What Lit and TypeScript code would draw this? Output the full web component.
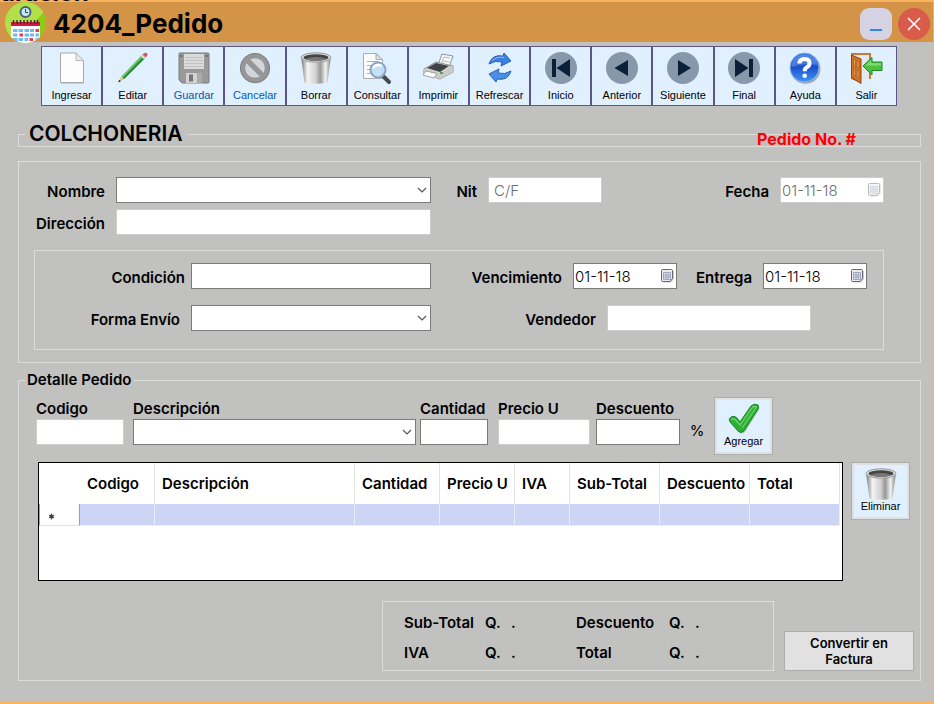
import { LitElement, html, css, svg, nothing, TemplateResult } from "lit";
import { customElement, property } from "lit/decorators.js";
import { classMap } from "lit/directives/class-map.js";

const ring = (shape: TemplateResult) => svg`
  <circle cx="16" cy="16" r="16" fill="#8798aa"/>${shape}`;

const ICONS: Record<string, TemplateResult> = {
  page: svg`
    <path d="M5 2H20L28 9V32H5Z" fill="#8c9097" opacity=".35"/>
    <path d="M4.500 1H20L27.500 8.500V30.500H4.500Z" fill="#fdfdfd" stroke="#a9abad"/>
    <path d="M20 1V8.500H27.500Z" fill="#e9ebed" stroke="#b4b6b8"/>`,
  pencil: svg`
    <path d="M2 29.500L4.500 24.500L25 3L28 6L7 27Z" fill="#3fa043"/>
    <path d="M4.500 24.500L25 3L26 4L5.500 25.500Z" fill="#7fd07c"/>
    <path d="M6.200 26.200L27.200 5.200L28 6L7 27Z" fill="#217a2c"/>
    <path d="M2 29.500L4.500 24.500L7 27Z" fill="#ecc98d"/>
    <path d="M1 30.500L2.400 27.800L3.900 29.200Z" fill="#222"/>
    <path d="M23.800 4.200L25.500 2.500L28.500 5.500L26.800 7.200Z" fill="#d9dadd"/>
    <path d="M25.500 2.500Q28 0 30 1.300Q31.500 3 28.500 5.500Z" fill="#d1545c"/>`,
  floppy: svg`
    <path d="M1 2Q1 1 2 1H30Q31 1 31 2V30Q31 31 30 31H4L1 28Z" fill="#9a9a9a" stroke="#7c7c7c"/>
    <rect x="6" y="2" width="20" height="15" fill="#dadada"/>
    <path d="M7 5.500H25M7 8.500H25M7 11.500H25M7 14.500H25" stroke="#c2c2c2"/>
    <rect x="2.500" y="3" width="2" height="2" fill="#666"/><rect x="27.500" y="3" width="2" height="2" fill="#666"/>
    <rect x="8" y="21" width="16" height="10" fill="#d2d2d2"/>
    <rect x="11" y="22.500" width="4" height="7" fill="#747474"/>
    <rect x="19" y="21" width="5" height="10" fill="#aaa"/>`,
  cancel: svg`
    <circle cx="16.500" cy="17" r="14.500" fill="#777" opacity=".3"/>
    <circle cx="16" cy="16" r="12.300" fill="#d0d6dc" stroke="#979797" stroke-width="5"/>
    <path d="M8 8L24 24" stroke="#979797" stroke-width="5.400"/>
    <circle cx="16" cy="16" r="14.600" fill="none" stroke="#808080"/>`,
  bin: svg`
    <defs><linearGradient id="metal">
      <stop offset="0" stop-color="#777"/><stop offset=".22" stop-color="#f4f4f4"/>
      <stop offset=".5" stop-color="#cfcfcf"/><stop offset=".64" stop-color="#979797"/>
      <stop offset=".82" stop-color="#f2f2f2"/><stop offset="1" stop-color="#808080"/>
    </linearGradient></defs>
    <path d="M1 5L4.500 30.500Q16 33 27.500 30.500L31 5Z" fill="url(#metal)"/>
    <ellipse cx="16" cy="5.500" rx="15" ry="4.700" fill="#dcdcdc" stroke="#9a9a9a"/>
    <ellipse cx="16" cy="5.500" rx="12.500" ry="3.300" fill="#454545"/>
    <path d="M5 7Q16 3 27 7Q22 9 16 9T5 7Z" fill="#777"/>`,
  search: svg`
    <path d="M2.500 1.500H15L21.500 7.500V26.500H2.500Z" fill="#fafbfc" stroke="#a8adb3"/>
    <path d="M15 1.500V7.500H21.500Z" fill="#dde1e5" stroke="#a8adb3"/>
    <path d="M6 9.500H18M6 13.500H12M6 17.500H10M6 21.500H12" stroke="#aab4c0"/>
    <path d="M22 24L28 30" stroke="#454b54" stroke-width="4" stroke-linecap="round"/>
    <circle cx="17" cy="18" r="7.500" fill="#b9dcf8" fill-opacity=".85" stroke="#8fa3bf" stroke-width="2"/>
    <path d="M12 16Q15 11 21 14" stroke="#fff" stroke-width="2" fill="none"/>`,
  printer: svg`
    <path d="M16 13L20 2L31 4L27 15Z" fill="#f5f7f8" stroke="#8e9499"/>
    <path d="M19.500 11L22 5L28 6M21 9L27 10" stroke="#b6bcc2" fill="none"/>
    <path d="M2 17L14 10L31 14V20L18 27L2 22Z" fill="#d2d4d2" stroke="#8c8f8e"/>
    <path d="M5 16L14 11L27 14L18 20Z" fill="#3f4346"/>
    <path d="M2 17L18 21L31 14V20L18 27L2 22Z" fill="#c9cbc9"/>
    <path d="M4 19L15 21.500L12 26L1 23Z" fill="#fff" stroke="#9da2a5"/>
    <rect x="18" y="20" width="3" height="2" fill="#55a345"/>`,
  refresh: svg`
    <path d="M5 12Q8 2 19 4L20 1L27 9L17 14L18 10Q11 8 5 12Z" fill="#3d7fdf" stroke="#2560b8"/>
    <path d="M27 19Q24 29 13 27L12 30L5 22L15 17L14 21Q21 23 27 19Z" fill="#4a8ee8" stroke="#2560b8"/>
    <path d="M8 9Q12 4 20 5.500" stroke="#8dbcf8" fill="none"/>`,
  first: ring(svg`<path d="M7 7H11V25H7ZM25 7V25L11.500 16Z" fill="#0a2038"/>`),
  prev: ring(svg`<path d="M22 8V24L8.500 16Z" fill="#0a2038"/>`),
  next: ring(svg`<path d="M11 8V24L24 16Z" fill="#0a2038"/>`),
  last: ring(svg`<path d="M7 7V25L20.500 16ZM21 7H25V25H21Z" fill="#0a2038"/>`),
  help: svg`
    <defs><linearGradient id="blue" x1="0" y1="0" x2="0" y2="1">
      <stop offset="0" stop-color="#2f6fe0"/><stop offset=".5" stop-color="#1c52cf"/><stop offset="1" stop-color="#3f95f5"/>
    </linearGradient></defs>
    <circle cx="16.500" cy="16.800" r="15" fill="#5b6470" opacity=".5"/>
    <circle cx="15.500" cy="15.500" r="14.500" fill="url(#blue)" stroke="#8eb2ea"/>
    <path d="M2.500 15Q3 3 15.500 2.500Q28 3 28.500 13Q15 10 2.500 15Z" fill="#7fa9ee" opacity=".45"/>
    <path d="M10.500 11.500Q10.500 7 15.500 7T20.500 11.300Q20.500 14 17.800 15.300Q15.700 16.300 15.700 19.300" stroke="#fff" stroke-width="4" fill="none"/>
    <circle cx="15.700" cy="23.700" r="2.300" fill="#fff"/>`,
  exit: svg`
    <path d="M1 1H21V27H11V31L1 27Z" fill="#c87a38"/>
    <path d="M3 3H19V27H11L3 5Z" fill="#e4e8ee"/>
    <path d="M1.500 3L11 7V31.500L1.500 25.500Z" fill="#cf7427" stroke="#8d4713"/>
    <path d="M3.500 7L5.500 8V14L3.500 13ZM7 8.500L9 9.500V16L7 15ZM3.500 16.500L5.500 17.500V24L3.500 23ZM7 18L9 19V26L7 25Z" fill="#e59a55" stroke="#a5591d" stroke-width=".6"/>
    <path d="M13 14L22 5.500V10H32V18.500H22V23Z" fill="#4cc13f" stroke="#1f8a22"/>
    <path d="M15.500 13.500L21.200 8V11.200H31V13.500Z" fill="#9be58c" opacity=".7"/>`,
  check: svg`
    <path d="M3 20Q1 17 4 15T9 16L12 20L24 3Q28 0 31 3Q32 5 31 7L17 29Q14 32 11 29Z" fill="#777" opacity=".35"/>
    <path d="M2 19Q0 16 3 14T9 15L12 19L23 3Q26 0 30 2Q31 4 30 6L16 28Q13 31 10 28Z" fill="#2fae35" stroke="#128a20"/>
    <path d="M3.500 17Q4 15 7 16.500L12 22L24.500 4.500Q26.500 2.500 28.500 4L14 25" fill="none" stroke="#6fd56c" stroke-width="1.200"/>`,
};

@customElement("tool-icon")
class ToolIcon extends LitElement {
  @property() name = "";
  static styles = css`
    :host { display: block; width: 32px; height: 32px; }
    .art { display: block; width: 100%; height: 100%; overflow: visible; }
  `;
  render() {
    return html`<svg class="art" viewBox="0 0 32 32" aria-hidden="true">${ICONS[this.name] ?? nothing}</svg>`;
  }
}

const TOOLS: [string, string, boolean?][] = [
  ["Ingresar", "page"], ["Editar", "pencil"], ["Guardar", "floppy", true], ["Cancelar", "cancel", true],
  ["Borrar", "bin"], ["Consultar", "search"], ["Imprimir", "printer"], ["Refrescar", "refresh"],
  ["Inicio", "first"], ["Anterior", "prev"], ["Siguiente", "next"], ["Final", "last"],
  ["Ayuda", "help"], ["Salir", "exit"],
];

const COLUMNS: [string, string][] = [
  ["Codigo", "c-code"], ["Descripción", "c-desc"], ["Cantidad", "c-qty"], ["Precio U", "c-price"],
  ["IVA", "c-iva"], ["Sub-Total", "c-sub"], ["Descuento", "c-disc"], ["Total", "c-total"],
];

@customElement("app-root")
class AppRoot extends LitElement {
  static styles = css`
    :host {
      display: block;
      font: 600 15px/20px Inter, "Open Sans", sans-serif;
      color: #000;
      --line: #dcdcda;
      --face: #c1c1bf;
      --amber: #f9b35f;
    }
    * { box-sizing: border-box; }
    button, input, select { font: inherit; color: inherit; margin: 0; }
    button { cursor: pointer; }
    fieldset { margin: 0; padding: 0; min-width: 0; border: 1px solid var(--line); }

    .window {
      min-height: 100vh; display: flex; flex-direction: column;
      background: var(--face);
      border-right: 1px solid var(--amber); border-bottom: 2px solid var(--amber);
    }
    .behind {
      height: 2px; overflow: hidden; background: var(--amber);
      display: flex; align-items: flex-end;
      font-size: 24px; line-height: 18px; font-weight: 700;
    }
    .titlebar {
      height: 40px; background: #d39447; padding: 0 3px 0 5px;
      display: flex; align-items: center; gap: 6px;
    }
    .logo { width: 41px; height: 41px; flex: none; }
    .title { flex: 1; margin: 0; padding: 3px 0 0 1px; font-size: 26px; line-height: 37px; font-weight: 700; }
    .win { width: 32px; height: 32px; padding: 0; border: 0; margin-top: 4px; }
    .min { background: #d5d3e3; border-radius: 9px; }
    .close { background: #d95b4a; border-radius: 50%; }
    .win svg { display: block; width: 32px; height: 32px; }

    .toolbar { display: grid; grid-template-columns: repeat(14, 1fr); margin: 4px 36px 0 41px; }
    .tool {
      height: 60px; padding: 5px 0 0; border: 1px solid #5b568a; background: #e0f0ff;
      display: flex; flex-direction: column; align-items: center; gap: 4px;
    }
    .tool, .action { font: 11px/14px "Liberation Sans", Arial, sans-serif; color: #000; }
    .tool.blue { color: #0a57b0; }

    .body { padding: 16px 12px 21px 18px; }
    .store-box { position: relative; }
    .store { font-size: 21px; line-height: 24px; margin-left: 6px; padding: 0 4px; background: var(--face); font-weight: 600; }
    .order { position: absolute; right: 64px; top: -6px; color: #f00; font-size: 16px; font-weight: 700; transform: none; margin-top: -11px; }
    .legend { margin-left: 6px; padding: 0 3px 0 2px; }

    .client { margin-top: 14px; padding: 15px 0 12px; }
    .row { display: grid; align-items: center; }
    .client-row { grid-template-columns: 97px 315fr 57px 114fr 178px 104px; padding-right: 36px; }
    .client-row + .client-row { margin-top: 6px; }
    .terms { margin: 15px 36px 0 15px; padding: 12px 16px 18px 0; }
    .terms-row { grid-template-columns: 156px 240fr 142px 104px 86px 104px; }
    .ship-row { grid-template-columns: 156px 240fr 176px 204px 56px; margin-top: 16px; }
    .lab { text-align: right; padding: 3px 11px 0 0; white-space: nowrap; }
    .lab.tight { padding-right: 6px; }

    .box {
      display: block; width: 100%; height: 26px; padding: 0 4px; border: 1px solid #7a7a7a;
      border-radius: 0; background: #fff; outline: 0; font-weight: 300; appearance: none; opacity: 1;
    }
    .box:disabled { border-color: #ccc; color: #6d6d6d; }
    .pick { position: relative; }
    .glyph { position: absolute; right: 4px; top: 8px; width: 10px; height: 10px; pointer-events: none; }
    .date .box { padding-left: 1px; }
    .date .glyph { right: 3px; top: 6px; width: 13px; height: 14px; }
    .faded { opacity: .45; }
    .nit { padding-left: 5px; }

    .detail { margin-top: 7px; padding-bottom: 9px; }
    .entry { padding: 7px 147px 0 17px; grid-template-columns: 97px 287fr 78px 98px 84px 34px 59px; align-items: start; }
    .field { padding-top: 2px; white-space: nowrap; }
    .field label { display: block; }
    .field.code { padding-right: 9px; }
    .field.desc { padding-right: 4px; }
    .field.qty { padding-right: 10px; }
    .field.price { padding-right: 6px; }
    .percent { align-self: center; text-align: center; font-weight: 400; padding-top: 10px; }
    .action {
      width: 59px; height: 58px; padding: 5px 0 0; border: 1px solid #adadad; background: #e0f0ff;
      box-shadow: inset 0 0 0 2px #e1e1e1; line-height: 12px;
      display: flex; flex-direction: column; align-items: center;
    }

    .list { display: grid; grid-template-columns: 1fr 59px; gap: 8px; margin: 7px 10px 0 19px; align-items: start; }
    .sheet { min-height: 119px; background: #fff; border: 1px solid #000; padding-right: 2px; }
    table { width: 100%; table-layout: fixed; border-collapse: separate; border-spacing: 0; }
    th { height: 41px; padding: 0 0 0 7px; text-align: left; font-weight: 600; white-space: nowrap; border-right: 1px solid #e3e3e3; }
    .c-mark { width: 41px; border-right: 0; }
    .c-code { width: 75px; } .c-qty { width: 85px; } .c-price { width: 75px; }
    .c-iva { width: 55px; } .c-sub, .c-disc, .c-total { width: 90px; }
    td { height: 22px; padding: 0; background: #ccd5f5; border-right: 1px solid #e6eefc; border-bottom: 1px solid #e6eefc; }
    td.mark { background: #fff; border-left: 1px solid #a0a0a0; border-right: 1px solid #a0a0a0; border-bottom-color: #e3e3e3; }
    .mark svg { display: block; width: 7px; height: 7px; margin: 4px 0 0 8px; }

    .foot { display: flex; justify-content: flex-end; align-items: flex-end; gap: 10px; margin: 20px 6px 0 0; }
    .totals {
      display: grid; grid-template-columns: 81px 26px 65px 93px 26px 1fr; row-gap: 10px;
      width: 392px; padding: 11px 0 7px 21px; border: 1px solid var(--line);
    }
    .convert {
      width: 130px; height: 40px; padding: 0 20px; border: 1px solid #adadad; background: #e1e1e1;
      font-size: 13px; line-height: 16px;
    }
  `;

  private pick(id: string) {
    return html`<div class="pick"><select class="box" id=${id}></select>
      <svg class="glyph" viewBox="0 0 10 10" aria-hidden="true"><path d="M1 3L5 7L9 3" fill="none" stroke="#555" stroke-width="1.200"/></svg></div>`;
  }

  private date(id: string, off = false) {
    return html`<div class="pick date"><input class="box" id=${id} value="01-11-18" ?disabled=${off} />
      <svg class=${classMap({ glyph: true, faded: off })} viewBox="0 0 13 14" aria-hidden="true">
        <path d="M2 2H13V10L10 13.500H2Z" fill="#aaa" opacity=".6"/>
        <path d="M.5 1.500Q.5 .5 1.500 .5H10.500Q11.500 .5 11.500 1.500V9.500L9 12.500H1.500Q.5 12.500 .5 11.500Z" fill="#e9eaf0" stroke="#6d6570"/>
        <path d="M2.500 3.500H9.500V10.500H2.500ZM2.500 6H9.500M2.500 8.200H9.500M5 3.500V10.500M7.200 3.500V10.500" fill="none" stroke="#8d9bb5" stroke-width=".8"/>
      </svg></div>`;
  }

  private logo() {
    return html`<svg class="logo" viewBox="0 0 41 41" aria-hidden="true">
      <defs><clipPath id="disc"><circle cx="20.500" cy="20.500" r="20.500"/></clipPath></defs>
      <g clip-path="url(#disc)">
        <rect width="41" height="41" fill="#8fcb14"/>
        <path d="M0 0H41V8L14 36H0Z" fill="#b2e04a"/>
        <circle cx="20.500" cy="10" r="5" fill="#c5e6f7" stroke="#4b627c" stroke-width="2"/>
        <path d="M20.500 7V10.500H23" fill="none" stroke="#34495e"/>
        <rect x="6" y="21" width="29" height="20" fill="#fff"/>
        <path d="M6 20H35V24H6Z" fill="#d3183f"/>
        <path d="M8.500 18V22M12 18V22M15.500 18V22M19 18V22M22.500 18V22M26 18V22M29.500 18V22M32.500 18V22" stroke="#3a3033" stroke-width="1.400"/>
        <path d="M8 28.500H12.500M13.500 28.500H18M19.500 28.500H24M25 28.500H29M8 33H12.500M19.500 33H24M25 33H29M30.500 33H34M8 37.500H12.500M13.500 37.500H18M19.500 37.500H23M30.500 37.500H34" stroke="#70b9f2" stroke-width="3"/>
        <path d="M30.500 28.500H34M14.500 33H18M24.500 37.500H28" stroke="#e33b50" stroke-width="3"/>
      </g></svg>`;
  }

  render() {
    return html`
      <div class="window">
        <div class="behind">uración</div>
        <header class="titlebar">
          ${this.logo()}
          <h1 class="title">4204_Pedido</h1>
          <button class="win min" aria-label="Minimizar"><svg viewBox="0 0 32 32"><path d="M10 22H22" stroke="#2f86ef" stroke-width="2"/></svg></button>
          <button class="win close" aria-label="Cerrar"><svg viewBox="0 0 32 32"><path d="M10 10L22 22M22 10L10 22" stroke="#fff" stroke-width="1.500"/></svg></button>
        </header>
        <nav class="toolbar">
          ${TOOLS.map(([text, icon, blue]) => html`
            <button class=${classMap({ tool: true, blue: !!blue })}><tool-icon name=${icon}></tool-icon>${text}</button>`)}
        </nav>
        <main class="body">
          <fieldset class="store-box">
            <legend class="store">COLCHONERIA</legend>
            <span class="order">Pedido No. #</span>
          </fieldset>

          <fieldset class="client">
            <div class="row client-row">
              <label class="lab" for="nombre">Nombre</label>${this.pick("nombre")}
              <label class="lab" for="nit">Nit</label><input class="box nit" id="nit" value="C/F" disabled />
              <label class="lab" for="fecha">Fecha</label>${this.date("fecha", true)}
            </div>
            <div class="row client-row">
              <label class="lab" for="direccion">Dirección</label><input class="box" id="direccion" disabled />
            </div>
            <fieldset class="terms">
              <div class="row terms-row">
                <label class="lab tight" for="condicion">Condición</label><input class="box" id="condicion" />
                <label class="lab" for="vencimiento">Vencimiento</label>${this.date("vencimiento")}
                <label class="lab" for="entrega">Entrega</label>${this.date("entrega")}
              </div>
              <div class="row ship-row">
                <label class="lab" for="envio">Forma Envío</label>${this.pick("envio")}
                <label class="lab" for="vendedor">Vendedor</label><input class="box" id="vendedor" disabled />
              </div>
            </fieldset>
          </fieldset>

          <fieldset class="detail">
            <legend class="legend">Detalle Pedido</legend>
            <div class="row entry">
              <div class="field code"><label for="codigo">Codigo</label><input class="box" id="codigo" disabled /></div>
              <div class="field desc"><label for="desc">Descripción</label>${this.pick("desc")}</div>
              <div class="field qty"><label for="cant">Cantidad</label><input class="box" id="cant" /></div>
              <div class="field price"><label for="precio">Precio U</label><input class="box" id="precio" disabled /></div>
              <div class="field"><label for="descuento">Descuento</label><input class="box" id="descuento" /></div>
              <span class="percent">%</span>
              <button class="action"><tool-icon name="check"></tool-icon>Agregar</button>
            </div>
            <div class="list">
              <div class="sheet">
                <table>
                  <thead><tr><th class="c-mark"></th>${COLUMNS.map(([t, c]) => html`<th class=${c}>${t}</th>`)}</tr></thead>
                  <tbody><tr>
                    <td class="mark"><svg viewBox="0 0 7 7" aria-hidden="true"><circle cx="3.500" cy="3.500" r="2" fill="#333"/><path d="M3.500 .5V6.500M1 2L6 5M6 2L1 5" stroke="#444"/></svg></td>
                    ${COLUMNS.map(() => html`<td></td>`)}
                  </tr></tbody>
                </table>
              </div>
              <button class="action"><tool-icon name="bin"></tool-icon>Eliminar</button>
            </div>
            <div class="foot">
              <div class="totals">
                <span>Sub-Total</span><span>Q.</span><span>.</span><span>Descuento</span><span>Q.</span><span>.</span>
                <span>IVA</span><span>Q.</span><span>.</span><span>Total</span><span>Q.</span><span>.</span>
              </div>
              <button class="convert">Convertir en Factura</button>
            </div>
          </fieldset>
        </main>
      </div>`;
  }
}
